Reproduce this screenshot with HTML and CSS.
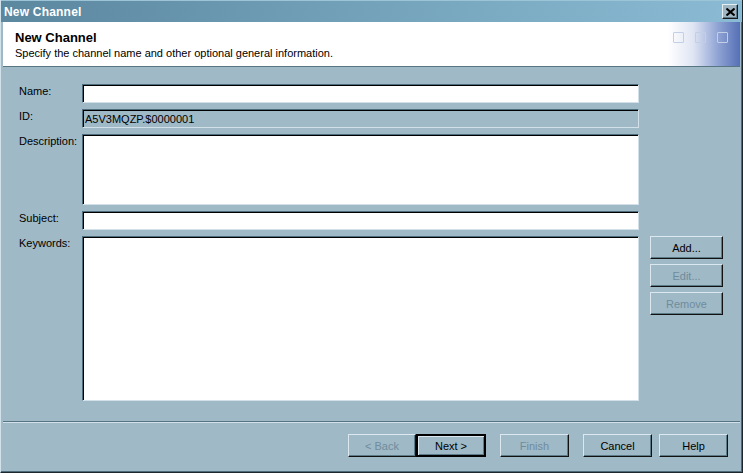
FILE: index.html
```html
<!DOCTYPE html>
<html>
<head>
<meta charset="utf-8">
<title>New Channel</title>
<link rel="stylesheet" href="styles.css">
</head>
<body>
<div class="window">
  <div class="titlebar">
    <span class="title">New Channel</span>
    <button class="close" aria-label="Close">
      <svg width="9" height="8" viewBox="0 0 9 8"><path d="M0.5 0.5L8.5 7.5M8.5 0.5L0.5 7.5" stroke="#000" stroke-width="2" fill="none"/></svg>
    </button>
  </div>
  <div class="frame">
    <div class="header">
      <div class="header-text">
        <div class="h-title">New Channel</div>
        <div class="h-sub">Specify the channel name and other optional general information.</div>
      </div>
      <div class="header-art">
        <span class="sq"></span><span class="sq"></span><span class="sq"></span>
      </div>
    </div>
    <div class="content">
      <label class="lbl">Name:</label>
      <div class="field"></div>
      <div></div>

      <label class="lbl">ID:</label>
      <div class="field ro">A5V3MQZP.$0000001</div>
      <div></div>

      <label class="lbl">Description:</label>
      <div class="field"></div>
      <div></div>

      <label class="lbl">Subject:</label>
      <div class="field"></div>
      <div></div>

      <label class="lbl">Keywords:</label>
      <div class="field"></div>
      <div class="side-btns">
        <button class="btn">Add...</button>
        <button class="btn" disabled>Edit...</button>
        <button class="btn" disabled>Remove</button>
      </div>
    </div>
    <div class="sep"></div>
    <div class="footer">
      <button class="btn back" disabled>&lt; Back</button>
      <button class="btn next">Next &gt;</button>
      <button class="btn finish" disabled>Finish</button>
      <button class="btn cancel">Cancel</button>
      <button class="btn help">Help</button>
    </div>
  </div>
</div>
</body>
</html>
```
FILE: styles.css
```css
* { box-sizing: border-box; }
html, body { margin: 0; padding: 0; }
body {
  width: 743px;
  height: 473px;
  overflow: hidden;
  font-family: "Liberation Sans", Arial, sans-serif;
  font-size: 11px;
  color: #000;
  background: #9fb9c7;
}
.window {
  width: 743px;
  height: 473px;
  display: flex;
  flex-direction: column;
  background: #9fb9c7;
  border-left: 1px solid #d2e2ea;
  border-right: 1px solid #1c272d;
  border-bottom: 1px solid #1c272d;
  box-shadow: inset -1px -1px 0 #4e6a79;
}
.titlebar {
  height: 22px;
  flex: none;
  display: flex;
  align-items: center;
  justify-content: space-between;
  padding: 0 4px 0 3px;
  background: linear-gradient(to right, #5b879f 0%, #6f9db6 40%, #8bbbd4 100%);
  border-top: 1px solid #9cc3d6;
}
.title {
  color: #fff;
  font-weight: bold;
  font-size: 12px;
  letter-spacing: 0.2px;
}
.close {
  width: 16px;
  height: 15px;
  padding: 0;
  margin: 0;
  display: flex;
  align-items: center;
  justify-content: center;
  background: #9fb5c2;
  border-top: 1px solid #e4eef3;
  border-left: 1px solid #e4eef3;
  border-right: 1px solid #1a1a1a;
  border-bottom: 1px solid #1a1a1a;
  box-shadow: inset -1px -1px 0 #5f7b8a;
}
.frame {
  flex: 1;
  display: flex;
  flex-direction: column;
  padding: 0 2px 2px 2px;
}
.header {
  height: 45px;
  flex: none;
  display: flex;
  background: #fff;
  border-bottom: 1px solid #587584;
}
.header-text {
  flex: 1;
  padding: 9px 0 0 12px;
}
.h-title {
  font-weight: bold;
  font-size: 13px;
  line-height: 14px;
}
.h-sub {
  line-height: 14px;
  margin-top: 1px;
}
.header-art {
  width: 72px;
  display: flex;
  gap: 11px;
  padding: 10px 0 0 5px;
  background: linear-gradient(to right, #ffffff 0%, #dfe5f3 35%, #8ea2d3 70%, #5670b6 100%);
}
.sq {
  width: 11px;
  height: 11px;
  border: 1px solid #c3cfe6;
  border-radius: 1px;
}
.content {
  flex: none;
  display: grid;
  grid-template-columns: 68px 557px 73px;
  grid-template-rows: 19px 19px 71px 19px 165px;
  column-gap: 11px;
  row-gap: 6px;
  padding: 17px 0 20px 0;
}
.lbl {
  padding: 1px 0 0 16px;
  line-height: 13px;
  white-space: nowrap;
}
.field {
  background: #fff;
  border-top: 1px solid #4d6c7c;
  border-left: 1px solid #4d6c7c;
  border-right: 1px solid #d2e1e9;
  border-bottom: 1px solid #d2e1e9;
  box-shadow: inset 1px 1px 0 #000;
  padding: 2px 0 0 2px;
  line-height: 14px;
}
.field.ro {
  background: #9fb9c7;
}
.side-btns {
  display: flex;
  flex-direction: column;
  gap: 5px;
}
.btn {
  height: 23px;
  margin: 0;
  padding: 0;
  font-family: "Liberation Sans", Arial, sans-serif;
  font-size: 11px;
  color: #000;
  background: #9fb9c7;
  border-top: 1px solid #dbe8ef;
  border-left: 1px solid #dbe8ef;
  border-right: 1px solid #111;
  border-bottom: 1px solid #111;
  box-shadow: inset -1px -1px 0 #5d7a89;
}
.btn:disabled {
  color: #6f8c9c;
}
.sep {
  height: 2px;
  flex: none;
  border-top: 1px solid #567382;
  border-bottom: 1px solid #d2e1e9;
}
.footer {
  display: flex;
  justify-content: flex-end;
  padding: 11px 12px 0 0;
}
.footer .btn { width: 69px; }
.footer .back { width: 68px; }
.footer .next {
  width: 70px;
  border: 2px solid #000;
  box-shadow: inset 1px 1px 0 #dbe8ef, inset -1px -1px 0 #5d7a89;
}
.footer .finish { margin-left: 14px; }
.footer .cancel { margin-left: 14px; }
.footer .help { margin-left: 7px; }
```
